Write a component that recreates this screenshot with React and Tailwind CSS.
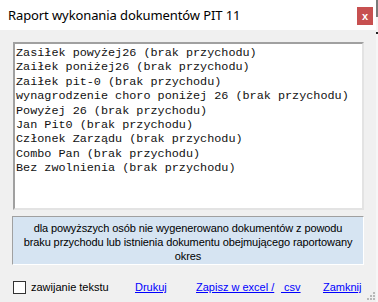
import React, { useState } from "react";

const rows = [
  "Zasiłek powyżej26 (brak przychodu)",
  "Zaiłek poniżej26 (brak przychodu)",
  "Zaiłek pit-0 (brak przychodu)",
  "wynagrodzenie choro poniżej 26 (brak przychodu)",
  "Powyżej 26 (brak przychodu)",
  "Jan Pit0 (brak przychodu)",
  "Członek Zarządu (brak przychodu)",
  "Combo Pan (brak przychodu)",
  "Bez zwolnienia (brak przychodu)",
];

const App = () => {
  const [wrap, setWrap] = useState(false);

  return (
    <div className="relative w-[378px] h-[302px] overflow-hidden bg-[#f0f0f0] font-['Liberation_Sans',Arial,sans-serif] text-black">
      {/* title bar */}
      <div className="h-[30px] bg-white flex items-start justify-between pl-[8px] pr-[5px]">
        <span className="mt-[6px] text-[13px] leading-[18px] font-['Noto_Sans',sans-serif] tracking-[-0.1px] whitespace-nowrap">
          Raport wykonania dokumentów PIT 11
        </span>
        <button className="mt-[7px] w-[16px] h-[18px] bg-[#c75050] text-white text-[11px] font-bold leading-[16px] flex items-center justify-center">
          x
        </button>
      </div>

      <div className="pl-[12px]">
        {/* list */}
        <div className="mt-[12px] ml-[1px] w-[351px] h-[168px] bg-white border-t-2 border-l-2 border-r-2 border-b-2 border-t-[#a0a0a0] border-l-[#a0a0a0] border-r-[#e3e3e3] border-b-[#e3e3e3] pt-[2px] pl-[1px] overflow-hidden">
          {rows.map((r) => (
            <div
              key={r}
              className={`font-['Liberation_Mono','Courier_New',monospace] text-[11.8px] leading-[14.4px] text-[#111111] ${wrap ? "whitespace-normal" : "whitespace-nowrap"}`}
            >
              {r}
            </div>
          ))}
        </div>

        {/* info */}
        <div className="mt-[6px] w-[352px] h-[49px] bg-[#d6e4f2] border-t border-l border-r border-b border-t-[#a0a0a0] border-l-[#a0a0a0] border-r-white border-b-white pt-[4px] text-center text-[11px] tracking-[-0.1px] leading-[14px] whitespace-nowrap">
          dla powyższych osób nie wygenerowano dokumentów z powodu
          <br />
          braku przychodu lub istnienia dokumentu obejmującego raportowany
          <br />
          okres
        </div>

        {/* actions */}
        <div className="mt-[15px] pl-[1px] flex items-center text-[11px] leading-[14px] whitespace-nowrap">
          <label className="flex items-center cursor-pointer">
            <input
              type="checkbox"
              checked={wrap}
              onChange={(e) => setWrap(e.target.checked)}
              className="appearance-none w-[13px] h-[13px] border border-[#333333] bg-white"
            />
            <span className="ml-[5px] w-[104px]">zawijanie tekstu</span>
          </label>
          <a href="#" className="w-[61px] text-[#0000ff] underline">
            Drukuj
          </a>
          <a href="#" className="w-[85px] text-[#0000ff] underline">
            Zapisz w excel /
          </a>
          <a href="#" className="w-[42px] text-[#0000ff] underline">
            {"\u00a0csv"}
          </a>
          <a href="#" className="text-[#0000ff] underline">
            Zamknij
          </a>
        </div>
      </div>

      {/* right edge of window behind */}
      <div className="absolute right-0 top-0 w-[2px] h-full bg-[#f6f6f6]">
        <div className="h-[17px] bg-[#7a7a7a]" />
        <div className="mt-[15px] h-[2px] bg-[#222222]" />
      </div>

      {/* resize grip */}
      <svg className="absolute right-[2px] bottom-[1px]" width="10" height="10" viewBox="0 0 10 10">
        <g fill="#b8b8b8">
          <rect x="7" y="1" width="2" height="2" />
          <rect x="4" y="4" width="2" height="2" />
          <rect x="7" y="4" width="2" height="2" />
          <rect x="1" y="7" width="2" height="2" />
          <rect x="4" y="7" width="2" height="2" />
          <rect x="7" y="7" width="2" height="2" />
        </g>
      </svg>
    </div>
  );
};

export default App;
